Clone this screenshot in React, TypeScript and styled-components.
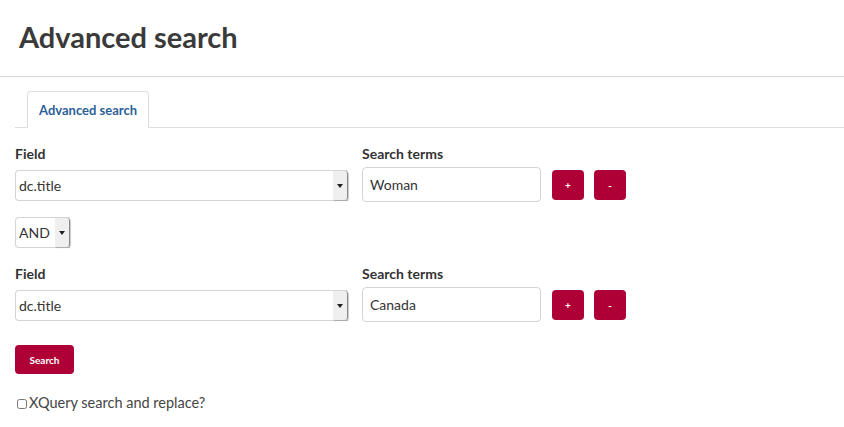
import { createGlobalStyle } from "styled-components";
import styled from "styled-components";

const GlobalStyle = createGlobalStyle`
	body {
		margin: 0;
		background: #ffffff;
		font-family: Lato, "Open Sans", sans-serif;
		color: #333333;
	}
`;

type RowData = {
	field: string;
	term: string;
};

const rows: RowData[] = [
	{ field: "dc.title", term: "Woman" },
	{ field: "dc.title", term: "Canada" },
];

const FieldSelect = ({ value, width }: { value: string; width: number }) => (
	<SelectBox width={width}>
		<SelectInput defaultValue={value}>
			<option>{value}</option>
		</SelectInput>
		<ArrowBox>
			<svg width="6" height="4" viewBox="0 0 6 4">
				<path d="M0 0 L6 0 L3 4 Z" fill="#222" />
			</svg>
		</ArrowBox>
	</SelectBox>
);

const SearchRow = ({ data }: { data: RowData }) => (
	<Row>
		<Column>
			<Label>Field</Label>
			<FieldSelect value={data.field} width={333} />
		</Column>
		<Column>
			<Label>Search terms</Label>
			<TermRow>
				<TermInput type="text" defaultValue={data.term} />
				<SmallButton>+</SmallButton>
				<SmallButton>-</SmallButton>
			</TermRow>
		</Column>
	</Row>
);

const App = () => {
	return (
		<>
			<GlobalStyle />
			<Header>
				<Title>Advanced search</Title>
			</Header>
			<Content>
				<Tabs>
					<Tab>Advanced search</Tab>
				</Tabs>
				<SearchRow data={rows[0]} />
				<Operator>
					<FieldSelect value="AND" width={55} />
				</Operator>
				<SearchRow data={rows[1]} />
				<SearchButton>Search</SearchButton>
				<CheckLine>
					<input type="checkbox" />
					<span>XQuery search and replace?</span>
				</CheckLine>
			</Content>
		</>
	);
};

export default App;

const Header = styled.div`
	padding: 19px 19px 21px;
	border-bottom: 1px solid #d8d8d8;
`;

const Title = styled.h1`
	margin: 0;
	font-size: 29px;
	font-weight: bold;
	color: #3a3a3a;
	line-height: 36px;
`;

const Content = styled.div`
	padding: 14px 0 0 15px;
`;

const Tabs = styled.div`
	display: flex;
	padding-left: 12px;
	border-bottom: 1px solid #dddddd;
`;

const Tab = styled.div`
	height: 36px;
	padding: 0 11px;
	display: flex;
	align-items: center;
	border: 1px solid #dddddd;
	border-bottom: none;
	border-radius: 4px 4px 0 0;
	margin-bottom: -1px;
	background: #ffffff;
	color: #2d5f97;
	font-size: 13px;
	font-weight: bold;
`;

const Row = styled.div`
	display: flex;
	gap: 14px;
	margin-top: 17px;
`;

const Column = styled.div`
	display: flex;
	flex-direction: column;
`;

const Label = styled.label`
	font-size: 14px;
	font-weight: bold;
	color: #333333;
	line-height: 18px;
	margin-bottom: 4px;
`;

const SelectBox = styled.div<{ width: number }>`
	display: flex;
	width: ${(props) => props.width}px;
	height: 31px;
	box-sizing: border-box;
	border: 1px solid #d4d4d4;
	border-right: none;
	border-radius: 4px 0 0 4px;
	margin-top: 3px;
	background: #ffffff;
`;

const SelectInput = styled.select`
	flex: 1;
	min-width: 0;
	appearance: none;
	border: none;
	background: transparent;
	padding: 0 3px;
	font-family: Lato, sans-serif;
	font-size: 14px;
	color: #333333;
	outline: none;
`;

const ArrowBox = styled.span`
	width: 14px;
	display: flex;
	align-items: center;
	justify-content: center;
	background: #efefef;
	border-right: 1px solid #888888;
	border-radius: 0 3px 3px 0;
	box-shadow: 1px 1px 1px rgba(0, 0, 0, 0.2);
`;

const TermRow = styled.div`
	display: flex;
	align-items: center;
	gap: 10px;
`;

const TermInput = styled.input`
	width: 179px;
	height: 35px;
	box-sizing: border-box;
	border: 1px solid #d4d4d4;
	border-radius: 4px;
	padding: 0 7px;
	font-family: Lato, sans-serif;
	font-size: 14px;
	color: #333333;
	margin-right: 1px;
`;

const SmallButton = styled.button`
	width: 32px;
	height: 30px;
	border: none;
	border-radius: 4px;
	background: #ae0036;
	color: #ffffff;
	font-family: Lato, sans-serif;
	font-size: 10px;
	font-weight: bold;
	padding: 0;
`;

const Operator = styled.div`
	margin-top: 15px;
	margin-bottom: 0;
`;

const SearchButton = styled.button`
	display: block;
	margin-top: 23px;
	width: 59px;
	height: 29px;
	border: none;
	border-radius: 4px;
	background: #ae0036;
	color: #ffffff;
	font-family: Lato, sans-serif;
	font-size: 10px;
	font-weight: bold;
	padding: 0;
`;

const CheckLine = styled.label`
	display: flex;
	align-items: center;
	gap: 2px;
	margin-top: 20px;
	font-size: 14.5px;
	color: #444444;

	input {
		width: 10px;
		height: 10px;
		margin: 2px 0 0 2px;
	}
`;
